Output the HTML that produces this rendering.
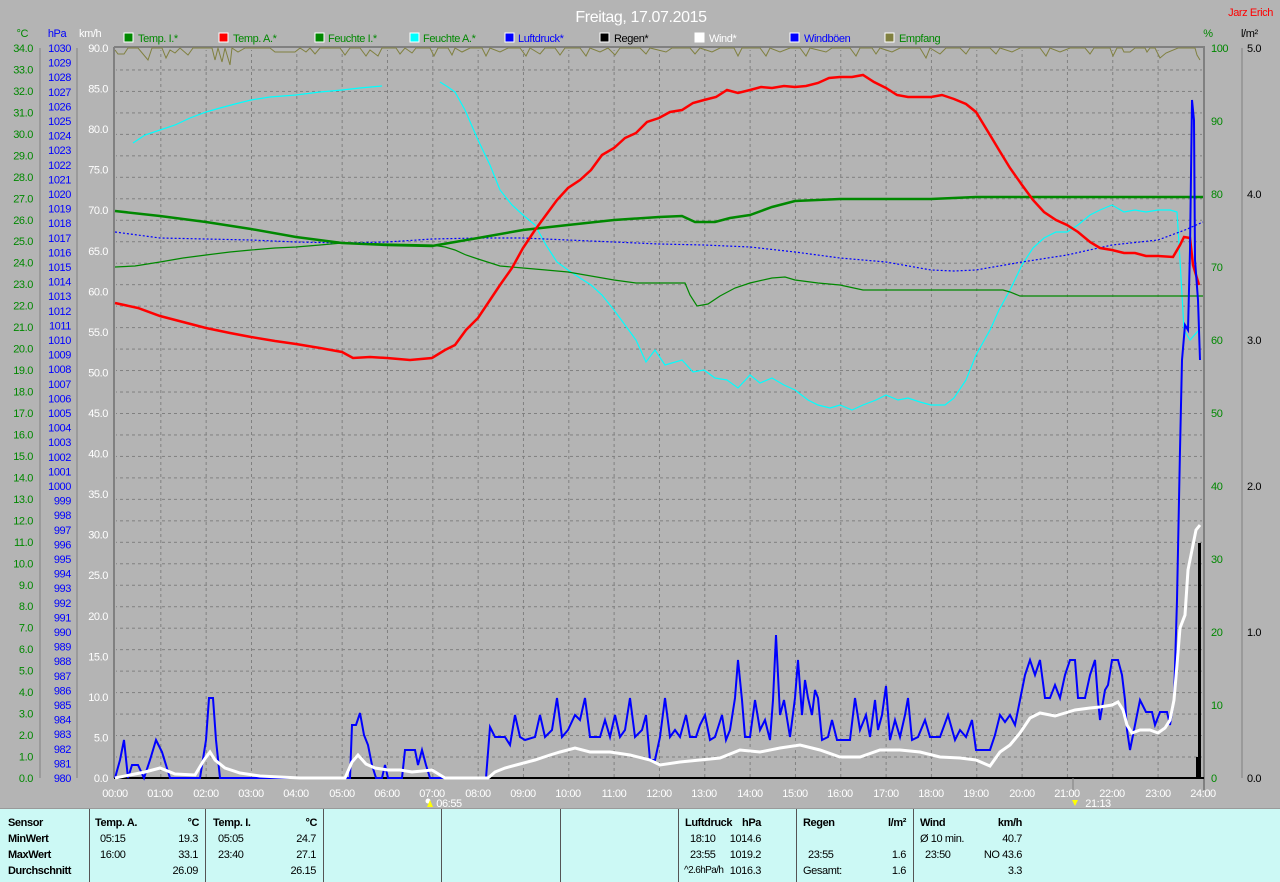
<!DOCTYPE html>
<html><head><meta charset="utf-8"><style>
html,body{margin:0;padding:0;width:1280px;height:881px;overflow:hidden;background:#b4b4b4;font-family:"Liberation Sans",sans-serif}
svg{position:absolute;left:0;top:0;letter-spacing:-0.4px}
#panel{position:absolute;left:0;top:808px;width:1280px;height:73px;background:#ccf9f5;border-top:1px solid #9a9a9a}
#panel div{position:absolute;font-size:11px;color:#000;white-space:nowrap;letter-spacing:-0.4px}
#panel .b{font-weight:bold}
#panel .r{text-align:right}
#panel .v{position:absolute;top:0;width:1px;height:73px;background:#555}
</style></head><body>
<svg width="1280" height="808" viewBox="0 0 1280 808">
<defs>
<pattern id="gh" patternUnits="userSpaceOnUse" x="0" y="48" width="12" height="21.47"><line x1="0" y1="0.5" x2="12" y2="0.5" stroke="#808080" stroke-dasharray="3,3"/></pattern>
<pattern id="gv" patternUnits="userSpaceOnUse" x="115" y="0" width="45.33" height="12"><line x1="0.5" y1="0" x2="0.5" y2="12" stroke="#808080" stroke-dasharray="3,3"/></pattern>
</defs>
<rect x="116" y="50" width="1086" height="727" fill="url(#gh)"/>
<rect x="116" y="50" width="1086" height="727" fill="url(#gv)"/>
<line x1="114" y1="47" x2="1205" y2="47" stroke="#808080" stroke-width="2"/>
<line x1="114" y1="47" x2="114" y2="778" stroke="#808080" stroke-width="2"/>
<line x1="1204" y1="47" x2="1204" y2="790" stroke="#808080" stroke-width="2"/>
<line x1="114" y1="778" x2="1204" y2="778" stroke="#000" stroke-width="2"/>
<line x1="40" y1="48" x2="40" y2="778" stroke="#808080"/>
<line x1="77" y1="48" x2="77" y2="778" stroke="#808080"/>
<line x1="1242" y1="48" x2="1242" y2="778" stroke="#808080"/>
<text x="641" y="22" font-size="16" fill="#fff" text-anchor="middle">Freitag, 17.07.2015</text>
<text x="1273" y="16" font-size="11" fill="#f00" text-anchor="end">Jarz Erich</text>
<g font-size="11">
<text x="28" y="37" fill="#080" text-anchor="end">°C</text>
<text x="57" y="37" fill="#00f" text-anchor="middle">hPa</text>
<text x="79" y="37" fill="#fff">km/h</text>
<text x="1208" y="37" fill="#080" text-anchor="middle">%</text>
<text x="1241" y="37" fill="#000">l/m²</text>
</g>
<g font-size="11">
<rect x="124" y="33" width="9" height="9" fill="#080" stroke="#fff"/><text x="138" y="42" fill="#080">Temp. I.*</text>
<rect x="219" y="33" width="9" height="9" fill="#f00" stroke="#fff"/><text x="233" y="42" fill="#080">Temp. A.*</text>
<rect x="315" y="33" width="9" height="9" fill="#080" stroke="#fff"/><text x="328" y="42" fill="#080">Feuchte I.*</text>
<rect x="410" y="33" width="9" height="9" fill="#0ff" stroke="#fff"/><text x="423" y="42" fill="#080">Feuchte A.*</text>
<rect x="505" y="33" width="9" height="9" fill="#00f" stroke="#fff"/><text x="518" y="42" fill="#00f">Luftdruck*</text>
<rect x="600" y="33" width="9" height="9" fill="#000" stroke="#fff"/><text x="614" y="42" fill="#000">Regen*</text>
<rect x="695" y="33" width="9" height="9" fill="#fff" stroke="#fff"/><text x="709" y="42" fill="#fff">Wind*</text>
<rect x="790" y="33" width="9" height="9" fill="#00f" stroke="#fff"/><text x="804" y="42" fill="#00f">Windböen</text>
<rect x="885" y="33" width="9" height="9" fill="#808040" stroke="#fff"/><text x="899" y="42" fill="#080">Empfang</text>
</g>
<g font-size="11" fill="#080" text-anchor="end">
<text x="33" y="52">34.0</text><text x="33" y="73.5">33.0</text><text x="33" y="95">32.0</text><text x="33" y="116.4">31.0</text><text x="33" y="137.9">30.0</text><text x="33" y="159.4">29.0</text><text x="33" y="180.8">28.0</text><text x="33" y="202.3">27.0</text><text x="33" y="223.8">26.0</text><text x="33" y="245.2">25.0</text><text x="33" y="266.7">24.0</text><text x="33" y="288.2">23.0</text><text x="33" y="309.7">22.0</text><text x="33" y="331.1">21.0</text><text x="33" y="352.6">20.0</text><text x="33" y="374.1">19.0</text><text x="33" y="395.5">18.0</text><text x="33" y="417">17.0</text><text x="33" y="438.5">16.0</text><text x="33" y="459.9">15.0</text><text x="33" y="481.4">14.0</text><text x="33" y="502.9">13.0</text><text x="33" y="524.4">12.0</text><text x="33" y="545.8">11.0</text><text x="33" y="567.3">10.0</text><text x="33" y="588.8">9.0</text><text x="33" y="610.2">8.0</text><text x="33" y="631.7">7.0</text><text x="33" y="653.2">6.0</text><text x="33" y="674.6">5.0</text><text x="33" y="696.1">4.0</text><text x="33" y="717.6">3.0</text><text x="33" y="739.1">2.0</text><text x="33" y="760.5">1.0</text><text x="33" y="782">0.0</text>
</g>
<g font-size="11" fill="#00f" text-anchor="end">
<text x="71" y="52">1030</text><text x="71" y="66.6">1029</text><text x="71" y="81.2">1028</text><text x="71" y="95.8">1027</text><text x="71" y="110.4">1026</text><text x="71" y="125">1025</text><text x="71" y="139.6">1024</text><text x="71" y="154.2">1023</text><text x="71" y="168.8">1022</text><text x="71" y="183.4">1021</text><text x="71" y="198">1020</text><text x="71" y="212.6">1019</text><text x="71" y="227.2">1018</text><text x="71" y="241.8">1017</text><text x="71" y="256.4">1016</text><text x="71" y="271">1015</text><text x="71" y="285.6">1014</text><text x="71" y="300.2">1013</text><text x="71" y="314.8">1012</text><text x="71" y="329.4">1011</text><text x="71" y="344">1010</text><text x="71" y="358.6">1009</text><text x="71" y="373.2">1008</text><text x="71" y="387.8">1007</text><text x="71" y="402.4">1006</text><text x="71" y="417">1005</text><text x="71" y="431.6">1004</text><text x="71" y="446.2">1003</text><text x="71" y="460.8">1002</text><text x="71" y="475.4">1001</text><text x="71" y="490">1000</text><text x="71" y="504.6">999</text><text x="71" y="519.2">998</text><text x="71" y="533.8">997</text><text x="71" y="548.4">996</text><text x="71" y="563">995</text><text x="71" y="577.6">994</text><text x="71" y="592.2">993</text><text x="71" y="606.8">992</text><text x="71" y="621.4">991</text><text x="71" y="636">990</text><text x="71" y="650.6">989</text><text x="71" y="665.2">988</text><text x="71" y="679.8">987</text><text x="71" y="694.4">986</text><text x="71" y="709">985</text><text x="71" y="723.6">984</text><text x="71" y="738.2">983</text><text x="71" y="752.8">982</text><text x="71" y="767.4">981</text><text x="71" y="782">980</text>
</g>
<g font-size="11" fill="#fff" text-anchor="end">
<text x="108" y="52">90.0</text><text x="108" y="92.6">85.0</text><text x="108" y="133.1">80.0</text><text x="108" y="173.7">75.0</text><text x="108" y="214.2">70.0</text><text x="108" y="254.8">65.0</text><text x="108" y="295.3">60.0</text><text x="108" y="335.9">55.0</text><text x="108" y="376.4">50.0</text><text x="108" y="417">45.0</text><text x="108" y="457.6">40.0</text><text x="108" y="498.1">35.0</text><text x="108" y="538.7">30.0</text><text x="108" y="579.2">25.0</text><text x="108" y="619.8">20.0</text><text x="108" y="660.3">15.0</text><text x="108" y="700.9">10.0</text><text x="108" y="741.4">5.0</text><text x="108" y="782">0.0</text>
</g>
<g font-size="11" fill="#080">
<text x="1211" y="52">100</text><text x="1211" y="125">90</text><text x="1211" y="198">80</text><text x="1211" y="271">70</text><text x="1211" y="344">60</text><text x="1211" y="417">50</text><text x="1211" y="490">40</text><text x="1211" y="563">30</text><text x="1211" y="636">20</text><text x="1211" y="709">10</text><text x="1211" y="782">0</text>
</g>
<g font-size="11" fill="#000">
<text x="1247" y="52">5.0</text><text x="1247" y="198">4.0</text><text x="1247" y="344">3.0</text><text x="1247" y="490">2.0</text><text x="1247" y="636">1.0</text><text x="1247" y="782">0.0</text>
</g>
<g font-size="11" fill="#fff" text-anchor="middle">
<text x="115" y="797">00:00</text><text x="160" y="797">01:00</text><text x="206" y="797">02:00</text><text x="251" y="797">03:00</text><text x="296" y="797">04:00</text><text x="342" y="797">05:00</text><text x="387" y="797">06:00</text><text x="432" y="797">07:00</text><text x="478" y="797">08:00</text><text x="523" y="797">09:00</text><text x="568" y="797">10:00</text><text x="614" y="797">11:00</text><text x="659" y="797">12:00</text><text x="704" y="797">13:00</text><text x="750" y="797">14:00</text><text x="795" y="797">15:00</text><text x="840" y="797">16:00</text><text x="886" y="797">17:00</text><text x="931" y="797">18:00</text><text x="976" y="797">19:00</text><text x="1022" y="797">20:00</text><text x="1067" y="797">21:00</text><text x="1112" y="797">22:00</text><text x="1158" y="797">23:00</text><text x="1203" y="797">24:00</text>
<text x="449" y="807">06:55</text><text x="1098" y="807">21:13</text>
</g>
<circle cx="428" cy="801" r="2.5" fill="#fff"/><polygon points="427,807 430,800 433,807" fill="#ff0"/>
<line x1="1073" y1="778" x2="1073" y2="790" stroke="#808080"/>
<polygon points="1072,800 1078,800 1075,806" fill="#ff0"/>
<polyline fill="none" stroke="#808040" stroke-width="1" points="115,50 118,54 124,54 128,48 138,48 143,54 148,60 152,48 162,48 166,58 170,50 175,53 180,48 188,55 193,48 212,48 215,60 218,48 222,62 225,48 230,65 232,48 238,52 245,48 270,48 275,52 295,52 300,48 306,52 310,48 315,54 320,48 340,48 345,55 350,48 360,48 366,56 370,50 378,56 382,48 396,48 400,54 405,48 412,53 416,48 430,48 434,56 438,48 448,48 452,55 455,48 462,52 470,48 482,48 486,56 490,48 500,52 508,48 520,48 526,56 530,48 540,54 545,48 555,48 560,55 565,48 580,48 586,56 590,48 600,52 608,48 615,55 620,48 640,48 646,54 650,48 666,52 672,48 690,48 695,54 700,48 712,52 720,48 734,48 738,56 742,48 760,48 766,56 770,48 780,52 790,48 800,48 806,56 810,48 826,52 832,48 850,48 856,56 860,48 872,48 876,54 880,48 892,52 900,48 920,48 926,58 930,48 940,54 946,48 960,48 966,54 970,48 990,48 996,54 1000,48 1012,52 1020,48 1040,48 1046,56 1050,48 1060,52 1070,48 1085,48 1090,54 1094,48 1110,48 1113,56 1117,48 1122,48 1124,52 1130,52 1135,48 1145,48 1147,52 1150,48 1155,48 1160,58 1166,53 1178,48 1195,48 1197,55 1200,60"/>
<polyline fill="none" stroke="#0ff" stroke-width="1.2" points="133,143 145,135 160,130 175,125 190,118 206,112 220,108 235,104 251,100 270,97 296,95 320,92 342,90 360,88 382,86"/>
<polyline fill="none" stroke="#0ff" stroke-width="1.2" points="440,82 448,87 455,92 465,110 478,140 490,165 500,190 512,205 523,215 535,225 546,245 557,262 568,270 580,278 591,285 602,295 614,310 625,325 636,340 646,362 655,350 665,365 682,360 693,372 704,370 715,378 727,380 738,388 750,375 760,383 772,378 784,385 795,390 808,400 818,405 830,408 840,405 852,410 863,405 876,400 886,395 898,400 908,398 920,402 931,405 945,405 954,398 966,380 976,355 990,330 999,310 1010,290 1022,265 1033,248 1044,238 1056,232 1067,232 1078,225 1090,215 1100,210 1112,205 1124,212 1135,210 1146,212 1158,210 1170,210 1177,212 1180,260 1184,330 1190,340 1199,330"/>
<polyline fill="none" stroke="#00f" stroke-width="1.2" stroke-dasharray="2,2" points="115,232 160,238 206,239 251,240 296,242 342,243 387,242 432,239 478,238 523,238 568,240 614,242 659,244 704,245 750,247 795,252 840,258 886,262 931,270 954,271 976,270 1022,262 1067,255 1112,245 1158,240 1185,230 1203,222"/>
<polyline fill="none" stroke="#080" stroke-width="1.2" points="115,267 135,266 160,262 183,258 206,255 230,252 251,250 275,248 296,247 320,245 342,243 387,244 432,245 445,247 455,250 466,255 478,259 500,266 523,268 546,270 568,272 591,276 614,280 636,283 659,283 685,283 690,295 697,306 708,304 720,296 735,288 750,283 772,278 785,277 795,280 818,283 840,285 863,290 886,290 931,290 976,290 1003,290 1010,292 1020,296 1040,296 1203,296"/>
<polyline fill="none" stroke="#080" stroke-width="2.5" points="115,211 160,216 206,222 251,229 296,237 342,243 387,245 432,246 478,238 523,230 568,225 614,220 659,217 682,216 695,222 715,222 730,218 750,215 772,207 795,201 840,199 886,199 931,199 976,197 1022,197 1203,197"/>
<polyline fill="none" stroke="#f00" stroke-width="2.5" points="115,303 138,308 160,316 183,322 206,328 230,333 251,337 275,341 296,344 320,348 342,352 353,358 370,357 387,358 410,360 432,358 445,350 455,345 466,330 478,318 490,300 500,285 512,268 523,248 535,230 546,215 557,200 568,188 580,180 591,170 602,155 614,148 625,138 636,133 647,122 659,118 670,112 682,110 693,103 704,100 716,97 727,90 738,93 750,90 761,87 772,88 784,86 795,87 806,86 818,83 829,78 840,77 852,77 863,75 874,82 886,88 897,95 908,97 920,97 931,97 942,95 954,99 966,104 976,112 990,135 999,150 1010,168 1022,185 1033,200 1044,212 1056,220 1067,225 1078,232 1090,242 1100,248 1112,250 1124,253 1135,253 1146,256 1158,256 1173,257 1180,245 1184,237 1190,238 1193,265 1199,285"/>
<rect x="1196" y="757" width="2" height="21" fill="#000"/>
<rect x="1198" y="543" width="3" height="235" fill="#000"/>
<polyline fill="none" stroke="#00f" stroke-width="2" points="115,778 120,760 124,740 128,778 132,765 138,765 144,778 150,760 156,740 162,752 166,765 170,778 200,778 206,740 209,698 213,698 216,740 220,778 350,778 352,725 356,725 360,713 364,735 368,745 372,765 376,778 382,778 385,765 388,778 402,778 405,750 415,750 418,765 422,750 426,765 430,778 486,778 490,727 495,737 505,737 510,745 515,715 520,737 525,740 535,737 540,715 545,737 552,730 557,698 562,737 568,730 575,715 580,720 585,698 590,737 600,737 605,720 610,737 615,715 620,737 625,730 630,698 635,737 642,730 646,715 650,760 655,760 660,737 665,698 670,737 675,730 680,737 686,715 690,737 696,737 700,725 705,715 710,740 715,737 722,715 726,740 730,730 735,698 738,660 742,700 745,737 750,737 755,700 760,730 765,720 770,740 773,700 776,635 780,715 784,700 790,737 795,698 798,660 802,715 805,680 808,698 812,715 815,690 818,698 822,740 828,737 832,720 837,740 850,740 855,698 860,730 866,715 870,737 875,700 878,730 882,715 886,686 890,740 895,720 900,737 905,715 908,698 912,740 918,737 925,720 930,737 940,737 948,715 955,740 960,730 966,737 972,720 976,750 990,750 995,735 1000,715 1005,722 1010,715 1015,725 1020,700 1025,675 1030,660 1035,675 1040,660 1045,698 1050,698 1055,685 1060,698 1065,675 1070,660 1075,660 1078,698 1085,698 1090,675 1095,660 1098,700 1100,720 1105,690 1108,685 1112,660 1118,660 1122,675 1125,700 1127,730 1130,750 1135,725 1140,700 1146,712 1152,712 1155,725 1160,712 1167,712 1170,725 1174,700 1177,600 1180,450 1182,360 1185,325 1188,330 1190,250 1192,100 1194,120 1195,260 1198,300 1200,360"/>
<polyline fill="none" stroke="#fff" stroke-width="3" points="115,778 130,775 145,772 160,768 175,774 195,775 204,760 210,752 215,760 225,768 240,773 260,776 300,778 345,778 352,762 358,755 366,764 375,768 388,770 400,770 412,772 432,770 445,778 488,778 495,772 505,768 520,764 535,760 550,755 560,752 575,748 590,752 610,752 630,755 650,760 660,765 680,762 700,760 720,758 740,750 760,752 780,748 800,745 820,750 840,757 860,757 880,750 900,750 920,752 940,757 960,758 976,760 990,766 1000,752 1010,745 1020,733 1030,718 1040,713 1055,716 1065,713 1075,710 1090,708 1100,707 1112,705 1118,702 1123,710 1127,725 1132,733 1140,730 1150,730 1158,733 1165,728 1170,720 1174,700 1177,665 1180,628 1185,615 1188,570 1192,550 1196,530 1200,525"/>
</svg>
<div id="panel">
<div class="v" style="left:89px"></div><div class="v" style="left:205px"></div><div class="v" style="left:323px"></div><div class="v" style="left:441px"></div><div class="v" style="left:560px"></div><div class="v" style="left:678px"></div><div class="v" style="left:796px"></div><div class="v" style="left:913px"></div>
<div class="b" style="left:8px;top:8px">Sensor</div>
<div class="b" style="left:8px;top:24px">MinWert</div>
<div class="b" style="left:8px;top:40px">MaxWert</div>
<div class="b" style="left:8px;top:56px">Durchschnitt</div>
<div class="b" style="left:95px;top:8px">Temp. A.</div><div class="b r" style="left:160px;width:39px;top:8px">°C</div>
<div style="left:100px;top:24px">05:15</div><div class="r" style="left:150px;width:48px;top:24px">19.3</div>
<div style="left:100px;top:40px">16:00</div><div class="r" style="left:150px;width:48px;top:40px">33.1</div>
<div class="r" style="left:150px;width:48px;top:56px">26.09</div>
<div class="b" style="left:213px;top:8px">Temp. I.</div><div class="b r" style="left:278px;width:39px;top:8px">°C</div>
<div style="left:218px;top:24px">05:05</div><div class="r" style="left:268px;width:48px;top:24px">24.7</div>
<div style="left:218px;top:40px">23:40</div><div class="r" style="left:268px;width:48px;top:40px">27.1</div>
<div class="r" style="left:268px;width:48px;top:56px">26.15</div>
<div class="b" style="left:685px;top:8px">Luftdruck</div><div class="b r" style="left:722px;width:39px;top:8px">hPa</div>
<div style="left:690px;top:24px">18:10</div><div class="r" style="left:712px;width:49px;top:24px">1014.6</div>
<div style="left:690px;top:40px">23:55</div><div class="r" style="left:712px;width:49px;top:40px">1019.2</div>
<div style="left:684px;top:56px;font-size:10px;letter-spacing:-0.6px">^2.6hPa/h</div><div class="r" style="left:712px;width:49px;top:56px">1016.3</div>
<div class="b" style="left:803px;top:8px">Regen</div><div class="b r" style="left:866px;width:40px;top:8px">l/m²</div>
<div style="left:808px;top:40px">23:55</div><div class="r" style="left:866px;width:40px;top:40px">1.6</div>
<div style="left:803px;top:56px">Gesamt:</div><div class="r" style="left:866px;width:40px;top:56px">1.6</div>
<div class="b" style="left:920px;top:8px">Wind</div><div class="b r" style="left:970px;width:52px;top:8px">km/h</div>
<div style="left:920px;top:24px">Ø 10 min.</div><div class="r" style="left:970px;width:52px;top:24px">40.7</div>
<div style="left:925px;top:40px">23:50</div><div class="r" style="left:970px;width:52px;top:40px">NO 43.6</div>
<div class="r" style="left:970px;width:52px;top:56px">3.3</div>
</div>
</body></html>
